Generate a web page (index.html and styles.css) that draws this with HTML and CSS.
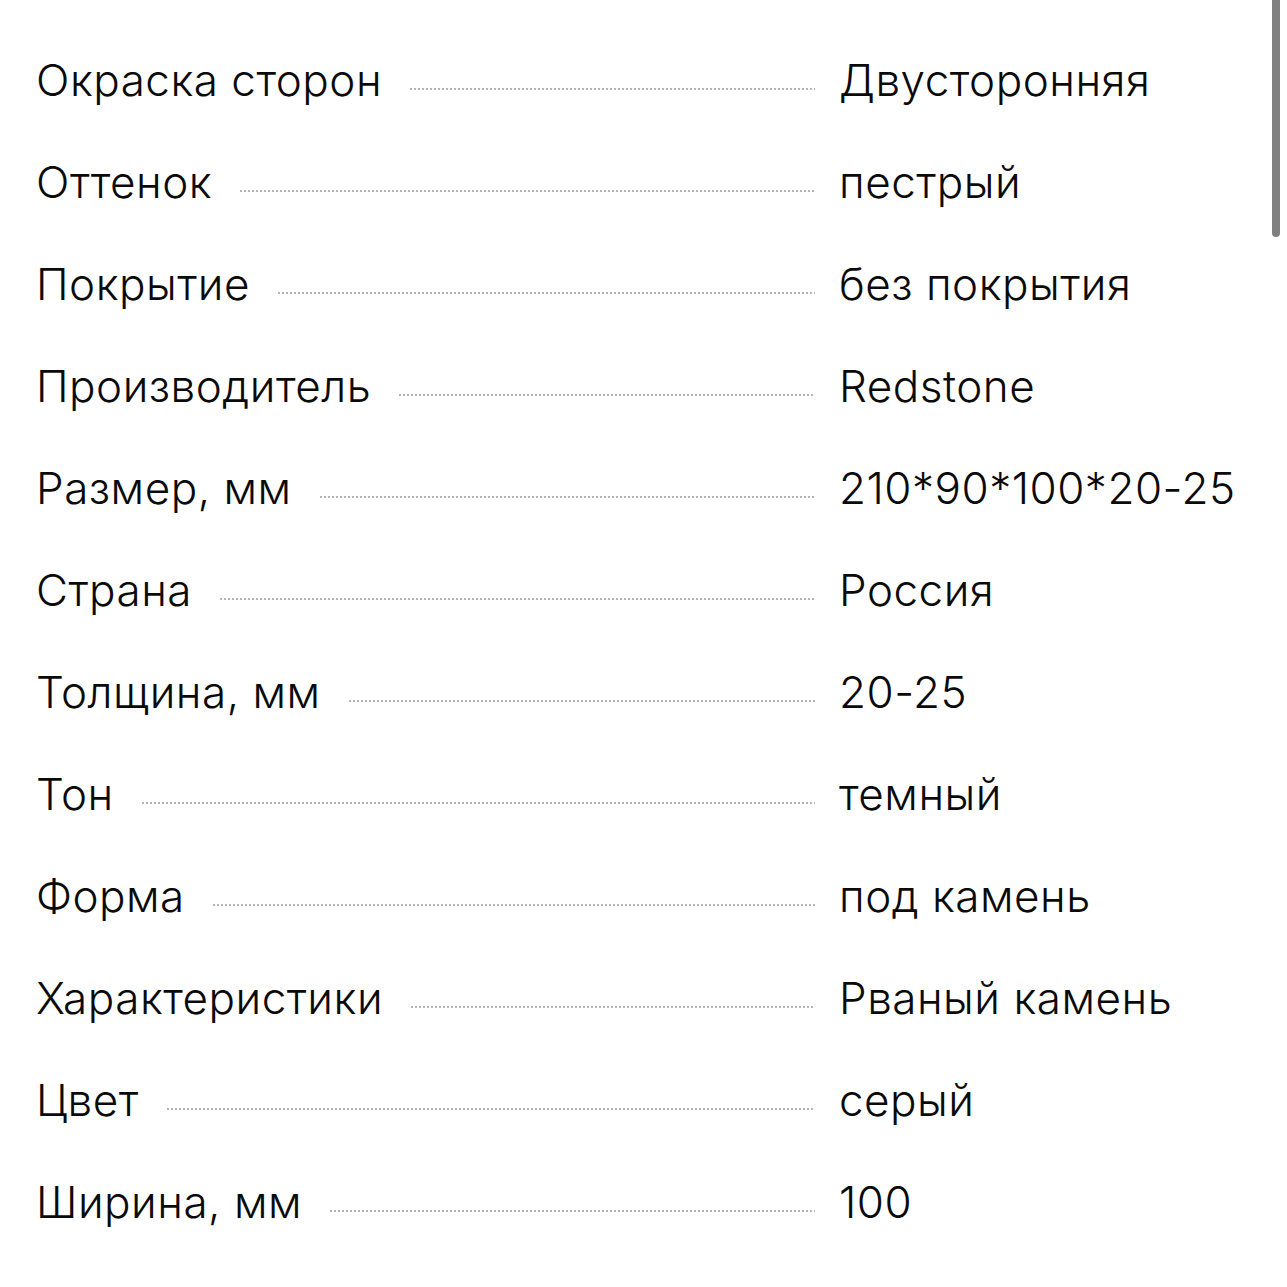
FILE: index.html
```html
<!DOCTYPE html>
<html lang="ru">
<head>
<meta charset="utf-8">
<link rel="stylesheet" href="styles.css">
</head>
<body>
<div class="scrollbar"></div>
<div class="specs">
  <div class="row"><div class="key"><span class="label">Окраска сторон</span><span class="leader"></span></div><div class="val">Двусторонняя</div></div>
  <div class="row"><div class="key"><span class="label">Оттенок</span><span class="leader"></span></div><div class="val">пестрый</div></div>
  <div class="row"><div class="key"><span class="label">Покрытие</span><span class="leader"></span></div><div class="val">без покрытия</div></div>
  <div class="row"><div class="key"><span class="label">Производитель</span><span class="leader"></span></div><div class="val">Redstone</div></div>
  <div class="row"><div class="key"><span class="label">Размер, мм</span><span class="leader"></span></div><div class="val">210*90*100*20-25</div></div>
  <div class="row"><div class="key"><span class="label">Страна</span><span class="leader"></span></div><div class="val">Россия</div></div>
  <div class="row"><div class="key"><span class="label">Толщина, мм</span><span class="leader"></span></div><div class="val">20-25</div></div>
  <div class="row"><div class="key"><span class="label">Тон</span><span class="leader"></span></div><div class="val">темный</div></div>
  <div class="row"><div class="key"><span class="label">Форма</span><span class="leader"></span></div><div class="val">под камень</div></div>
  <div class="row"><div class="key"><span class="label">Характеристики</span><span class="leader"></span></div><div class="val">Рваный камень</div></div>
  <div class="row"><div class="key"><span class="label">Цвет</span><span class="leader"></span></div><div class="val">серый</div></div>
  <div class="row"><div class="key"><span class="label">Ширина, мм</span><span class="leader"></span></div><div class="val">100</div></div>
</div>
</body>
</html>
```
FILE: styles.css
```css
html, body {
  margin: 0;
  padding: 0;
  background: #fff;
}
body {
  font-family: Inter, "Noto Sans", sans-serif;
  color: #0a0a0a;
  overflow: hidden;
}
.specs {
  padding: 29px 0 0 36px;
}
.row {
  display: grid;
  grid-template-columns: 779px 1fr;
  column-gap: 24px;
  height: 102px;
  font-size: 44px;
  font-weight: 350;
  letter-spacing: 0.5px;
  line-height: 102px;
  font-feature-settings: "calt" 0;
}
.key {
  display: flex;
  align-items: baseline;
  min-width: 0;
}
.label {
  white-space: nowrap;
}
.leader {
  flex: 1;
  margin-left: 28px;
  height: 2px;
  position: relative;
  top: -6px;
  background-image: linear-gradient(to right, #b4b4b4 0 2px, transparent 2px 4px);
  background-size: 4px 2px;
  background-repeat: repeat-x;
}
.val {
  white-space: nowrap;
}
.scrollbar {
  position: fixed;
  top: 0;
  right: 7px;
  width: 8px;
  height: 237px;
  background: #808080;
  border-radius: 0 0 4px 4px;
}
```
